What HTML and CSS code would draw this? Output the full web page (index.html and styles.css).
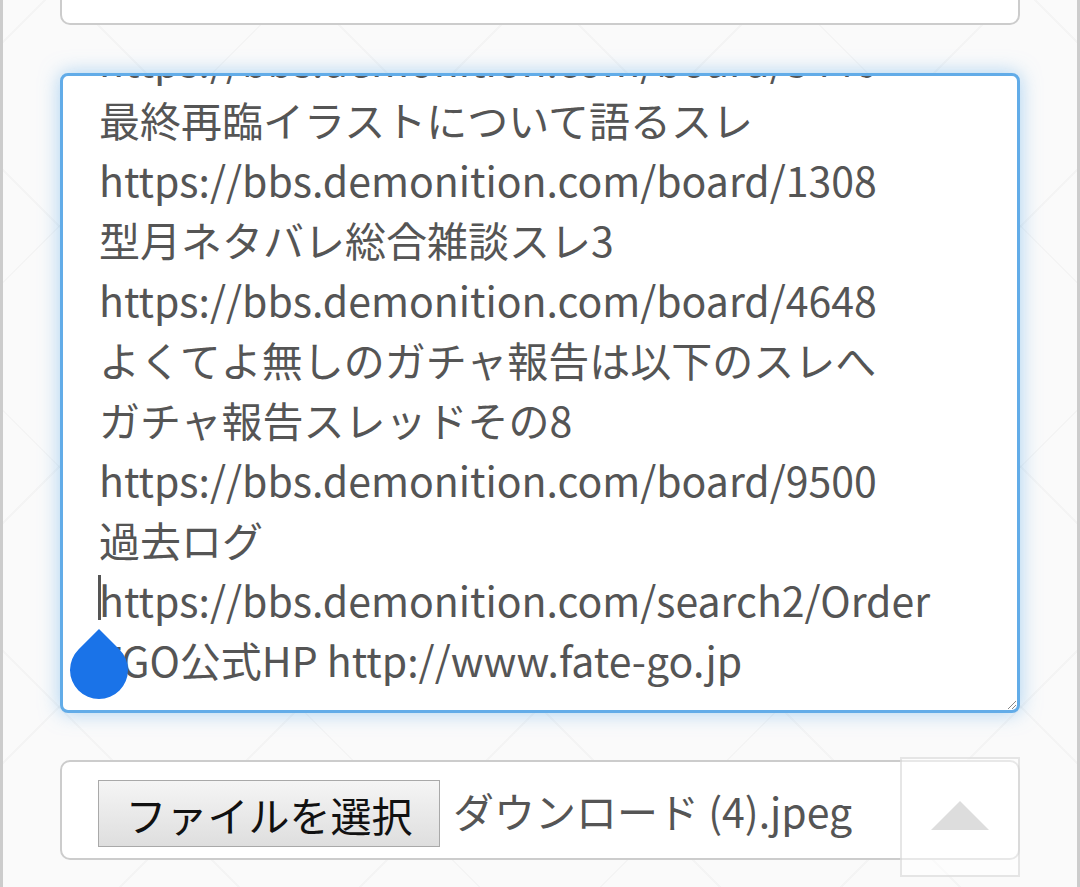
FILE: index.html
```html
<!DOCTYPE html>
<html lang="ja">
<head>
<meta charset="utf-8">
<title>投稿フォーム</title>
<link rel="stylesheet" href="styles.css">
</head>
<body>
<div class="page">
  <div class="prev-box"></div>
  <div class="editor">
    <div class="editor-text">
      <div class="line">https://bbs.demonition.com/board/3446</div>
      <div class="line">最終再臨イラストについて語るスレ</div>
      <div class="line">https://bbs.demonition.com/board/1308</div>
      <div class="line">型月ネタバレ総合雑談スレ3</div>
      <div class="line">https://bbs.demonition.com/board/4648</div>
      <div class="line">よくてよ無しのガチャ報告は以下のスレへ</div>
      <div class="line">ガチャ報告スレッドその8</div>
      <div class="line">https://bbs.demonition.com/board/9500</div>
      <div class="line">過去ログ</div>
      <div class="line caret-line"><span class="caret"></span>https://bbs.demonition.com/search2/Order</div>
      <div class="line">FGO公式HP http://www.fate-go.jp</div>
    </div>
    <span class="handle"></span>
    <span class="resize"></span>
  </div>
  <div class="file-box">
    <button class="file-btn" type="button">ファイルを選択</button>
    <span class="file-name">ダウンロード (4).jpeg</span>
  </div>
</div>
<a class="to-top" href="#"><span class="triangle"></span></a>
</body>
</html>
```

FILE: styles.css
```css
html, body {
  margin: 0;
  height: 100%;
}
body {
  background-color: #fafafa;
  background-image:
    repeating-linear-gradient(45deg, transparent 0 168px, rgba(0,0,0,0.025) 168px 170px),
    repeating-linear-gradient(-45deg, transparent 0 168px, rgba(0,0,0,0.025) 168px 170px);
  border-left: 3px solid #cccccc;
  border-right: 3px solid #cccccc;
  box-sizing: border-box;
  overflow: hidden;
  font-family: "Noto Sans CJK JP", "Noto Sans", sans-serif;
  color: #555555;
}
.page {
  padding: 0 57px;
}
.prev-box {
  height: 80px;
  margin-top: -55px;
  background: #ffffff;
  border: 2px solid #cccccc;
  border-radius: 10px;
  box-sizing: border-box;
}
.editor {
  position: relative;
  margin-top: 48px;
  height: 640px;
  box-sizing: border-box;
  background: #ffffff;
  border: 3px solid #62ace8;
  border-radius: 8px;
  box-shadow: 0 0 20px rgba(102, 175, 233, 0.55);
  overflow: hidden;
}
.editor-text {
  margin-top: -47px;
  padding-left: 36px;
  font-size: 41px;
  line-height: 60px;
  white-space: nowrap;
}
.caret-line {
  position: relative;
}
.caret {
  position: absolute;
  left: -1px;
  top: 6px;
  width: 3px;
  height: 45px;
  background: #555555;
}
.handle {
  position: absolute;
  left: 7px;
  top: 565px;
  width: 58px;
  height: 58px;
  background: #1a73e8;
  border-radius: 0 50% 50% 50%;
  transform: rotate(45deg);
}
.resize {
  position: absolute;
  right: 1px;
  bottom: 1px;
  width: 8px;
  height: 8px;
  background: linear-gradient(135deg, transparent 0 45%, #888 45% 55%, transparent 55% 70%, #888 70% 80%, transparent 80%);
}
.file-box {
  margin-top: 47px;
  height: 100px;
  box-sizing: border-box;
  background: #ffffff;
  border: 2px solid #cccccc;
  border-radius: 10px;
  display: flex;
  align-items: center;
  padding-left: 36px;
  gap: 13px;
}
.file-btn {
  height: 67px;
  width: 342px;
  margin-top: 7px;
  padding: 0;
  font-family: "Noto Sans CJK JP", sans-serif;
  font-size: 41px;
  color: #111111;
  background: linear-gradient(#f5f5f5, #dedede);
  border: 1px solid #a9a9a9;
  border-radius: 0;
}
.file-name {
  font-size: 41px;
  margin-top: 0;
}
.to-top {
  position: fixed;
  left: 900px;
  top: 757px;
  width: 120px;
  height: 120px;
  box-sizing: border-box;
  border: 2px solid rgba(200, 200, 200, 0.45);
  background: rgba(255, 255, 255, 0.55);
  display: flex;
  align-items: center;
  justify-content: center;
}
.triangle {
  width: 0;
  height: 0;
  margin-top: -4px;
  border-left: 29px solid transparent;
  border-right: 29px solid transparent;
  border-bottom: 29px solid #dddddd;
}
```
